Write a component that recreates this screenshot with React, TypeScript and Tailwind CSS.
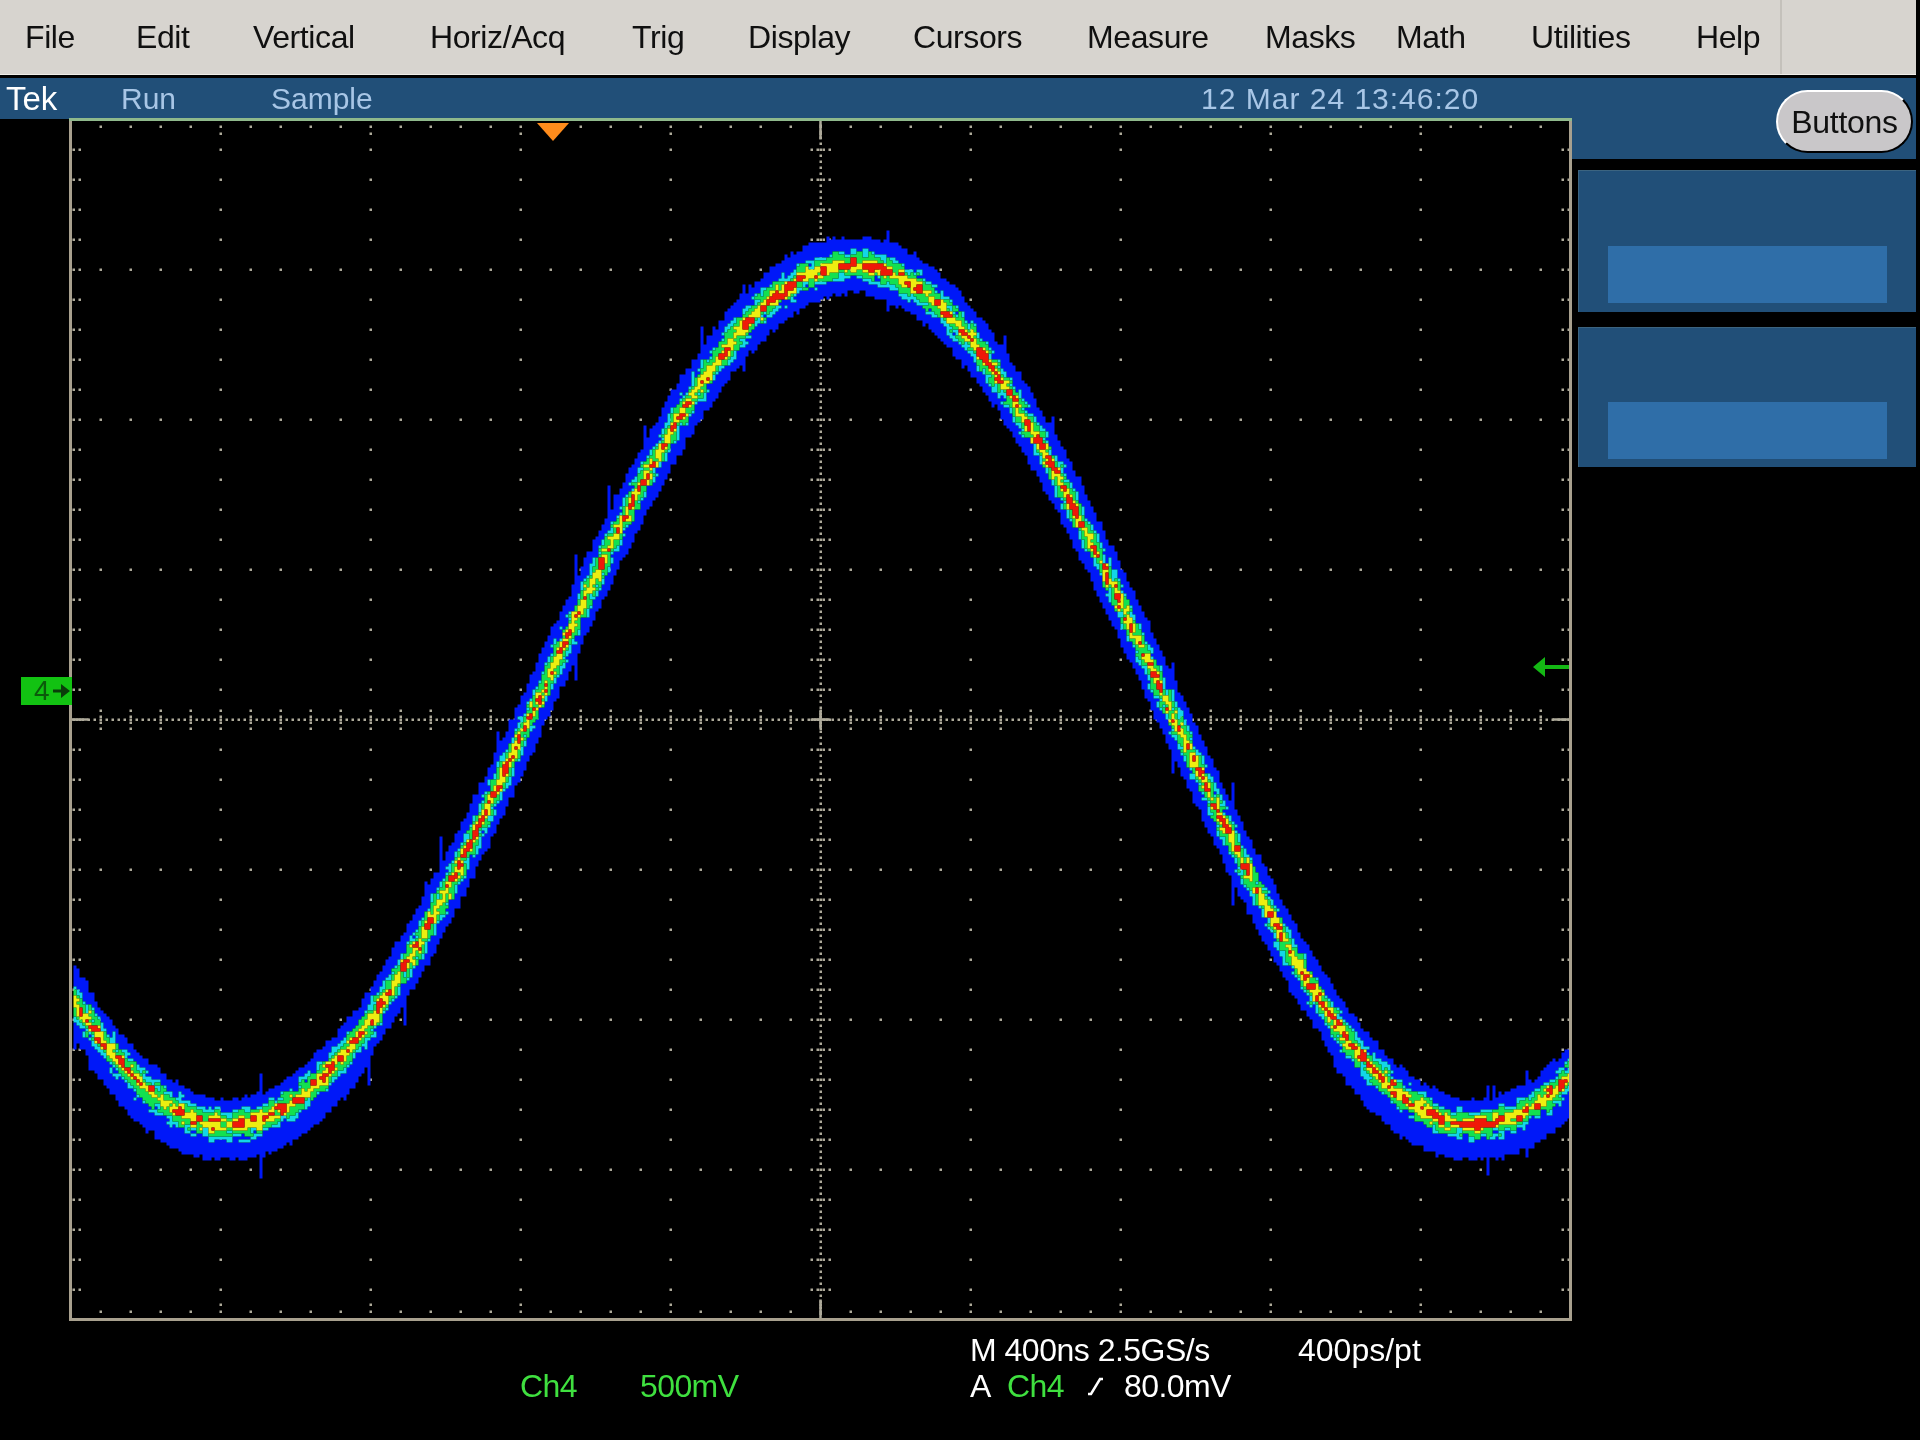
import React from "react";

const menuItems = [
  { label: "File", cls: "w-[111px]" },
  { label: "Edit", cls: "w-[117px]" },
  { label: "Vertical", cls: "w-[177px]" },
  { label: "Horiz/Acq", cls: "w-[202px]" },
  { label: "Trig", cls: "w-[116px]" },
  { label: "Display", cls: "w-[165px]" },
  { label: "Cursors", cls: "w-[174px]" },
  { label: "Measure", cls: "w-[178px]" },
  { label: "Masks", cls: "w-[131px]" },
  { label: "Math", cls: "w-[135px]" },
  { label: "Utilities", cls: "w-[165px]" },
  { label: "Help", cls: "w-[84px]" },
];

// plot coordinates: 0,0 is the top left corner of the graticule
const PLOT_W = 1500;
const PLOT_H = 1200;

function buildDots() {
  const d: string[] = [];
  const dot = (x: number, y: number) => d.push(`M${x - 1} ${y - 1}h2.500v2.500h-2.500z`);
  for (let k = 0; k <= 10; k++) {
    for (let y = 30; y < PLOT_H; y += 30) dot(k * 150, y);
  }
  for (let m = 0; m <= 8; m++) {
    for (let x = 30; x < PLOT_W; x += 30) dot(x, m * 150);
  }
  for (let y = 30; y < PLOT_H; y += 30) {
    dot(3, y);
    dot(9, y);
    dot(PLOT_W - 8, y);
    dot(PLOT_W - 2, y);
  }
  for (let x = 30; x < PLOT_W; x += 30) {
    dot(x, 7);
    dot(x, PLOT_H - 8);
    if (x % 150 === 0) {
      dot(x, 14);
      dot(x, PLOT_H - 15);
    }
  }
  // center lines, finer dots with ticks every 30
  for (let x = 6; x < PLOT_W; x += 6) dot(x, 600);
  for (let y = 6; y < PLOT_H; y += 6) dot(750, y);
  for (let x = 30; x < PLOT_W; x += 30) {
    dot(x, 591);
    dot(x, 597);
    dot(x, 603);
    dot(x, 609);
  }
  for (let y = 30; y < PLOT_H; y += 30) {
    dot(741, y);
    dot(747, y);
    dot(753, y);
    dot(759, y);
  }
  return d.join("");
}

function buildTrace() {
  let seed = 12345;
  const rnd = () => {
    seed = (seed * 1664525 + 1013904223) % 4294967296;
    return seed / 4294967296;
  };
  const BLUE = "#0018f8";
  const CYAN = "#12d6e8";
  const GREEN = "#12e050";
  const YELLOW = "#eeee10";
  const RED = "#f01808";
  const paths: Record<string, string[]> = { [BLUE]: [], [CYAN]: [], [GREEN]: [], [YELLOW]: [], [RED]: [] };
  const wave = (x: number) => 574 - 430 * Math.cos((2 * Math.PI * (x - 780)) / 1246);
  // colour noise is held over 6px blocks, the reference is chunky
  const blocks = new Map<string, number[]>();
  const block = (x: number, y: number) => {
    const key = `${Math.floor(x / 6)}:${Math.floor(y / 6)}`;
    let b = blocks.get(key);
    if (!b) {
      b = [rnd(), rnd()];
      blocks.set(key, b);
    }
    return b;
  };
  for (let x = 3; x < PLOT_W - 1; x += 3) {
    const yc = wave(x);
    const slope = Math.abs(wave(x + 3) - wave(x)) / 3;
    const spike = rnd() < 0.06 ? 6 + rnd() * 14 : 0;
    const trough = yc > 900 ? 7 : 0;
    const top = 25 + rnd() * 5 + (rnd() < 0.5 ? spike : 0) - trough * 0.4;
    const bottom = 25 + rnd() * 5 + (rnd() < 0.5 ? spike : 0) + trough;
    const w = 1 + slope * 0.2;
    for (let gy = Math.floor((yc - 70) / 3) * 3; gy < yc + 70; gy += 3) {
      const dy = gy - yc;
      const lim = (dy < 0 ? top : bottom) * w;
      if (Math.abs(dy) > lim) continue;
      const [r1, r2] = block(x, gy);
      const n = Math.abs(dy) / (1 + slope * 0.2) + (r1 - 0.5) * 6;
      let c = BLUE;
      if (n < 3.5) c = r2 < 0.5 ? RED : YELLOW;
      else if (n < 7) c = r2 < 0.5 ? YELLOW : GREEN;
      else if (n < 11) c = r2 < 0.7 ? GREEN : CYAN;
      else if (n < 15) c = r2 < 0.6 ? CYAN : BLUE;
      paths[c].push(`M${x} ${gy}h3v3h-3z`);
    }
  }
  return Object.entries(paths).map(([fill, d]) => ({ fill, d: d.join("") }));
}

const dots = buildDots();
const trace = buildTrace();

function Graticule() {
  return (
    <svg width="1503" height="1203" viewBox="-1.5 -1.5 1503 1203" className="block">
      <path d={dots} fill="#aeaa9a" />
      {trace.map((t) => (
        <path key={t.fill} d={t.d} fill={t.fill} />
      ))}
      <path
        d="M0 600h18M1482 600h18M750 0v20M750 1180v20M741 600h18M750 591v18"
        stroke="#aeaa9a"
        strokeWidth="2.500"
        fill="none"
      />
      <path d="M0 0V1200H1500V0" stroke="#a8a08e" strokeWidth="3" fill="none" />
      <path d="M-1.500 0H1501.500" stroke="#8fb98c" strokeWidth="3" fill="none" />
    </svg>
  );
}

export default function App() {
  return (
    <div className="w-[1920px] h-[1440px] bg-black overflow-hidden blur-[0.7px] font-['Liberation_Sans',Arial,sans-serif]">
      <div className="w-[1916px] h-[75px] bg-[#d7d4cf] border-b border-[#f0eee9] flex items-center pl-[25px] text-[32px] leading-none text-[#101010]">
        {menuItems.map((m) => (
          <div key={m.label} className={m.cls}>
            <span className="tracking-[-0.4px]">{m.label}</span>
          </div>
        ))}
        <div className="h-full flex-1 border-l-2 border-[#c4c1bb]" />
      </div>

      <div className="flex mt-[3px]">
        <div className="w-[1571px]">
          <div className="h-[41px] bg-[#214f78] flex items-center pl-[6px] text-[30px] leading-none text-[#a8c6e6]">
            <div className="w-[115px] text-[33px] text-white">Tek</div>
            <div className="w-[150px]">Run</div>
            <div className="w-[930px]">Sample</div>
            <div className="tracking-[1px]">12 Mar 24 13:46:20</div>
          </div>

          <div className="relative pl-[69px] -mt-[1px]">
            <Graticule />
            <div className="absolute left-[21px] top-[559px] w-[51px] h-[28px] bg-[#12c212] flex items-center text-[#0b5a0b]">
              <span className="ml-[13px] text-[28px] leading-none">4</span>
              <svg width="18" height="16" viewBox="0 0 18 16" className="ml-[3px]">
                <path d="M0 6.500h8V1l9 7-9 7V9.500H0z" fill="#0a3d0a" />
              </svg>
            </div>
            <svg
              width="36"
              height="22"
              viewBox="0 0 36 22"
              className="absolute left-[1533px] top-[538px]"
            >
              <path d="M0 11l12-10v8h24v4H12v8z" fill="#14b814" />
            </svg>
            <svg
              width="32"
              height="18"
              viewBox="0 0 32 18"
              className="absolute left-[537px] top-[5px]"
            >
              <path d="M0 0h32L16 18z" fill="#ff8c1c" />
            </svg>
          </div>

          <div className="mt-[11px] text-[32px] leading-[36px] text-white">
            <div className="flex pl-[970px]">
              <div className="w-[328px] tracking-[-0.5px]">M 400ns 2.5GS/s</div>
              <div>400ps/pt</div>
            </div>
            <div className="flex pl-[520px] tracking-[-0.6px]">
              <div className="w-[120px] text-[#3fe03f]">Ch4</div>
              <div className="w-[330px] text-[#3fe03f]">500mV</div>
              <div className="w-[37px]">A</div>
              <div className="w-[80px] text-[#3fe03f]">Ch4</div>
              <div className="w-[37px] flex items-center">
                <svg width="16" height="20" viewBox="0 0 16 20">
                  <path d="M1 18h3L13 3h3" stroke="#fff" strokeWidth="2.500" fill="none" />
                </svg>
              </div>
              <div>80.0mV</div>
            </div>
          </div>
        </div>

        <div className="w-[345px]">
          <div className="h-[81px] bg-[#214f78] flex justify-end items-start pt-[12px] pr-[3px]">
            <div className="w-[137px] h-[63px] rounded-full bg-[#c9c7c9] border-2 border-t-white border-l-white border-r-black border-b-black flex items-center justify-center text-[32px] leading-none tracking-[-0.3px] text-[#101010]">
              Buttons
            </div>
          </div>
          <div className="ml-[7px] mt-[11px] h-[142px] bg-[#214f78] border-t border-l border-[#3c6480] pl-[29px] pt-[75px]">
            <div className="w-[279px] h-[57px] bg-[#2f6ea8]" />
          </div>
          <div className="ml-[7px] mt-[15px] h-[140px] bg-[#214f78] border-t border-l border-[#3c6480] pl-[29px] pt-[74px]">
            <div className="w-[279px] h-[57px] bg-[#2f6ea8]" />
          </div>
        </div>
      </div>
    </div>
  );
}
